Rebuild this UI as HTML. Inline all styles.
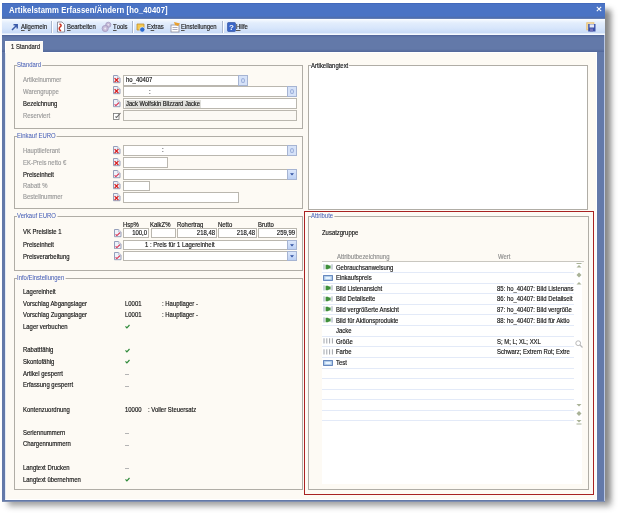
<!DOCTYPE html>
<html><head><meta charset="utf-8">
<style>
*{margin:0;padding:0;box-sizing:border-box}
html,body{width:620px;height:515px;overflow:hidden;background:#fff}
body{position:relative;font-family:"Liberation Sans",sans-serif;color:#222}
#w{position:absolute;left:0;top:0;width:620px;height:515px;filter:blur(0.35px)}
.a{position:absolute}
.t{position:absolute;white-space:nowrap;line-height:10px;height:10px;transform-origin:0 50%;-webkit-text-stroke:0.16px currentColor}
u{text-decoration:none;border-bottom:0.6px solid #555;line-height:5.5px;display:inline-block}
</style></head><body>
<div class="a" style="left:8px;top:10px;width:603px;height:496px;background:#404040;filter:blur(3px);opacity:.5"></div>
<div class="a" style="left:600px;top:10px;width:10px;height:490px;background:#404040;filter:blur(2.5px);opacity:.25"></div>
<div id="w">

<div class="a" style="left:2px;top:3px;width:603px;height:499px;background:#6379a9;"></div>
<div class="a" style="left:2px;top:501px;width:603px;height:1px;background:#7d8db0;"></div>
<div class="a" style="left:2px;top:3px;width:603px;height:16px;background:linear-gradient(#3b60b2 0,#4a73c5 1px,#4a73c4 13px,#4f6fb0 14.5px,#6a84b8 16px);"></div>
<div class="t" style="left:9px;top:5.20px;color:#fff;font-size:8.6px;font-weight:bold;transform:scaleX(0.898);-webkit-text-stroke:0;letter-spacing:0.1px">Artikelstamm Erfassen/Ändern [ho_40407]</div>
<svg class="a" style="left:595.5px;top:6px" width="6" height="6" viewBox="0 0 6 6"><path d="M0.8 0.8 L5.2 5.2 M5.2 0.8 L0.8 5.2" stroke="#fff" stroke-width="1.05"/></svg>
<div class="a" style="left:2px;top:19px;width:603px;height:16px;background:linear-gradient(#ffffff 0,#f0f6fe 1.5px,#e2edfc 4px,#d8e6fb 9px,#cadcf7 13.5px,#eef5fe 15px,#fff 16px);"></div>
<div class="a" style="left:2px;top:35px;width:603px;height:17px;background:linear-gradient(#4d6196 0,#5a70a3 1px,#6379a9 3px,#6379a9 14px,#586d9e 16px,#52679a 17px);"></div>
<div class="a" style="left:604px;top:35px;width:1px;height:466px;background:#b8c6e4;"></div>
<div class="a" style="left:5px;top:52px;width:592px;height:448px;background:#fdfaf4;border-top:1px solid #fff;border-right:1px solid #fff;border-bottom:1px solid #fff;border-left:1px solid #e4ebf6;"></div>
<div class="a" style="left:5px;top:41px;width:38px;height:12px;background:#fdfaf4;border-top:1px solid #fff;border-left:1px solid #fff;"></div>
<div class="t" style="left:10.5px;top:42.20px;color:#222;font-size:6.6px;font-weight:normal;transform:scaleX(0.9);">1 Standard</div>
<svg class="a" style="left:10px;top:22px" width="9" height="10" viewBox="0 0 9 10"><path d="M2 8 L7 3 M3.5 2.7 H7.2 V6.4" stroke="#3a5aa8" stroke-width="1.5" fill="none"/></svg>
<div class="t" style="left:21.3px;top:22.20px;color:#222;font-size:6.6px;font-weight:normal;transform:scaleX(0.9);"><u>A</u>llgemein</div>
<div class="a" style="left:51px;top:21px;width:1px;height:12px;background:#a9b6cc;"></div>
<div class="a" style="left:52px;top:21px;width:1px;height:12px;background:#fff;"></div>
<svg class="a" style="left:56px;top:21px" width="10" height="12" viewBox="0 0 10 12"><path d="M1.5 1 H6 L8.5 3.5 V11 H1.5 Z" fill="#fff" stroke="#7a7a8a" stroke-width=".8"/><path d="M3.5 3 Q6.5 4 4 6 Q2 8 5 10" stroke="#c83020" stroke-width="1.5" fill="none"/></svg>
<div class="t" style="left:66.7px;top:22.20px;color:#222;font-size:6.6px;font-weight:normal;transform:scaleX(0.9);"><u>B</u>earbeiten</div>
<svg class="a" style="left:101px;top:21px" width="11" height="12" viewBox="0 0 11 12"><circle cx="7.3" cy="3.8" r="2.6" fill="#c6bcd8" stroke="#9e94bc" stroke-width=".7"/><circle cx="4.2" cy="7.5" r="3.1" fill="#c6bcd8" stroke="#9e94bc" stroke-width=".7"/><circle cx="4.2" cy="7.5" r="1" fill="#eeeaf4"/><circle cx="7.3" cy="3.8" r="0.8" fill="#eeeaf4"/></svg>
<div class="t" style="left:113px;top:22.20px;color:#222;font-size:6.6px;font-weight:normal;transform:scaleX(0.9);"><u>T</u>ools</div>
<div class="a" style="left:132px;top:21px;width:1px;height:12px;background:#a9b6cc;"></div>
<div class="a" style="left:133px;top:21px;width:1px;height:12px;background:#fff;"></div>
<svg class="a" style="left:136px;top:21px" width="10" height="12" viewBox="0 0 10 12"><path d="M1 3 H8 V9 H1 Z" fill="#f4c850" stroke="#c09030" stroke-width=".8"/><circle cx="6.3" cy="8.6" r="2.6" fill="#2a6ad0" stroke="#fff" stroke-width=".6"/></svg>
<div class="t" style="left:147px;top:22.20px;color:#222;font-size:6.6px;font-weight:normal;transform:scaleX(0.9);">E<u>x</u>tras</div>
<svg class="a" style="left:169.5px;top:21px" width="11" height="12" viewBox="0 0 11 12"><rect x="1" y="4" width="8" height="7" fill="#fff" stroke="#8a8a9a" stroke-width=".8"/><path d="M2.5 6.5 H7.5 M2.5 8.5 H7.5" stroke="#8a8aa0" stroke-width=".7"/><path d="M4 1 L10 2.5 L8 5 L5 4 Z" fill="#e8a030"/></svg>
<div class="t" style="left:181px;top:22.20px;color:#222;font-size:6.6px;font-weight:normal;transform:scaleX(0.9);"><u>E</u>instellungen</div>
<div class="a" style="left:222px;top:21px;width:1px;height:12px;background:#a9b6cc;"></div>
<div class="a" style="left:223px;top:21px;width:1px;height:12px;background:#fff;"></div>
<svg class="a" style="left:226.5px;top:22px" width="9" height="10" viewBox="0 0 9 10"><rect x="0.5" y="0.5" width="8" height="9" rx="1" fill="#3a66c8" stroke="#2a4a98" stroke-width=".6"/><text x="4.5" y="8" font-family="Liberation Sans" font-weight="bold" font-size="8" fill="#fff" text-anchor="middle">?</text></svg>
<div class="t" style="left:236.4px;top:22.20px;color:#222;font-size:6.6px;font-weight:normal;transform:scaleX(0.9);"><u>H</u>ilfe</div>
<svg class="a" style="left:586px;top:22px" width="10" height="10" viewBox="0 0 10 10"><rect x="0.3" y="0.3" width="8" height="8" fill="#ecc070"/><rect x="1.3" y="1.3" width="6" height="6" fill="#f4e0b0"/><rect x="2.2" y="2" width="7.3" height="7.5" fill="#3a50a8"/><rect x="3.6" y="2.3" width="4.5" height="3.2" fill="#e4e8f6"/><rect x="4" y="6.5" width="3" height="3" fill="#7070b8"/></svg>
<div class="a" style="left:14px;top:65px;width:289px;height:64px;border:1px solid #b0ada6;"></div>
<div class="t" style="left:16.5px;top:60.10px;color:#4a62b8;font-size:6.6px;font-weight:normal;transform:scaleX(0.9);background:linear-gradient(transparent 3.5px,#fdfaf4 3.5px,#fdfaf4 7px,transparent 7px);padding-right:1.5px;-webkit-text-stroke:0.05px currentColor;">Standard</div>
<div class="t" style="left:23.2px;top:75.00px;color:#9a9a9a;font-size:6.6px;font-weight:normal;transform:scaleX(0.9);">Artikelnummer</div>
<div class="t" style="left:23.2px;top:86.80px;color:#9a9a9a;font-size:6.6px;font-weight:normal;transform:scaleX(0.9);">Warengruppe</div>
<div class="t" style="left:23.2px;top:98.70px;color:#141414;font-size:6.6px;font-weight:normal;transform:scaleX(0.9);">Bezeichnung</div>
<div class="t" style="left:23.2px;top:110.90px;color:#9a9a9a;font-size:6.6px;font-weight:normal;transform:scaleX(0.9);">Reserviert</div>
<svg class="a" style="left:113px;top:75px" width="8" height="8.5" viewBox="0 0 8 8.5"><path d="M0.5 0.5 H4.6 L7 2.9 V7.7 H0.5 Z" fill="#eef2fa" stroke="#8a94b2" stroke-width=".9"/><path d="M4.6 0.5 V2.9 H7" fill="#fff" stroke="#9aa4c0" stroke-width=".6"/><path d="M1.6 3.2 L5.4 7 M5.4 3.2 L1.6 7" stroke="#d81818" stroke-width="1.2"/></svg>
<svg class="a" style="left:113px;top:86px" width="8" height="8.5" viewBox="0 0 8 8.5"><path d="M0.5 0.5 H4.6 L7 2.9 V7.7 H0.5 Z" fill="#eef2fa" stroke="#8a94b2" stroke-width=".9"/><path d="M4.6 0.5 V2.9 H7" fill="#fff" stroke="#9aa4c0" stroke-width=".6"/><path d="M1.6 3.2 L5.4 7 M5.4 3.2 L1.6 7" stroke="#d81818" stroke-width="1.2"/></svg>
<svg class="a" style="left:113px;top:99px" width="8" height="8.5" viewBox="0 0 8 8.5"><path d="M0.5 0.5 H4.6 L7 2.9 V7.7 H0.5 Z" fill="#eef2fa" stroke="#8a94b2" stroke-width=".9"/><path d="M4.6 0.5 V2.9 H7" fill="#fff" stroke="#9aa4c0" stroke-width=".6"/><path d="M1.6 5.3 L2.9 6.6 L6 3.6" stroke="#d82848" stroke-width="1.1" fill="none"/></svg>
<svg class="a" style="left:113px;top:112px" width="8" height="8" viewBox="0 0 8 8"><rect x="0.5" y="1.5" width="5.5" height="6" fill="#fff" stroke="#777" stroke-width=".8"/><path d="M2.5 4.5 L3.5 5.5 L7.5 1" stroke="#666" stroke-width="1.1" fill="none"/></svg>
<div class="a" style="left:123px;top:75px;width:125px;height:11px;background:#fff;border:1px solid #bab7af;"></div>
<div class="a" style="left:238px;top:75px;width:10px;height:11px;background:#d6e2f8;border:1px solid #a6b4d2;"></div>
<div class="a" style="left:241px;top:78px;width:4px;height:5px;border:1px solid #98acd8;border-radius:50%;"></div>
<div class="t" style="left:126px;top:75.40px;color:#141414;font-size:6.6px;font-weight:normal;transform:scaleX(0.9);">ho_40407</div>
<div class="a" style="left:123px;top:86px;width:174px;height:11px;background:#fff;border:1px solid #bab7af;"></div>
<div class="a" style="left:287px;top:86px;width:10px;height:11px;background:#d6e2f8;border:1px solid #a6b4d2;"></div>
<div class="a" style="left:290px;top:89px;width:4px;height:5px;border:1px solid #98acd8;border-radius:50%;"></div>
<div class="t" style="left:149px;top:86.60px;color:#141414;font-size:6.6px;font-weight:normal;transform:scaleX(0.9);">:</div>
<div class="a" style="left:123px;top:98px;width:174px;height:11px;background:#fff;border:1px solid #bab7af;"></div>
<div class="a" style="left:124.5px;top:99.5px;width:76.0px;height:8.0px;background:#e0e0dc;"></div>
<div class="t" style="left:125.5px;top:99.00px;color:#141414;font-size:6.6px;font-weight:normal;transform:scaleX(0.875);">Jack Wolfskin Blizzard Jacke</div>
<div class="a" style="left:123px;top:110px;width:174px;height:11px;background:#fbf9f4;border:1px solid #bab7af;"></div>
<div class="a" style="left:14px;top:136px;width:289px;height:73px;border:1px solid #b0ada6;"></div>
<div class="t" style="left:16.5px;top:131.10px;color:#4a62b8;font-size:6.6px;font-weight:normal;transform:scaleX(0.9);background:linear-gradient(transparent 3.5px,#fdfaf4 3.5px,#fdfaf4 7px,transparent 7px);padding-right:1.5px;-webkit-text-stroke:0.05px currentColor;">Einkauf EURO</div>
<div class="t" style="left:23.2px;top:145.90px;color:#9a9a9a;font-size:6.6px;font-weight:normal;transform:scaleX(0.9);">Hauptlieferant</div>
<div class="t" style="left:23.2px;top:157.90px;color:#9a9a9a;font-size:6.6px;font-weight:normal;transform:scaleX(0.9);">EK-Preis netto €</div>
<div class="t" style="left:23.2px;top:170.10px;color:#141414;font-size:6.6px;font-weight:normal;transform:scaleX(0.9);">Preiseinheit</div>
<div class="t" style="left:23.2px;top:180.90px;color:#9a9a9a;font-size:6.6px;font-weight:normal;transform:scaleX(0.9);">Rabatt %</div>
<div class="t" style="left:23.2px;top:192.40px;color:#9a9a9a;font-size:6.6px;font-weight:normal;transform:scaleX(0.9);">Bestellnummer</div>
<svg class="a" style="left:113px;top:146px" width="8" height="8.5" viewBox="0 0 8 8.5"><path d="M0.5 0.5 H4.6 L7 2.9 V7.7 H0.5 Z" fill="#eef2fa" stroke="#8a94b2" stroke-width=".9"/><path d="M4.6 0.5 V2.9 H7" fill="#fff" stroke="#9aa4c0" stroke-width=".6"/><path d="M1.6 3.2 L5.4 7 M5.4 3.2 L1.6 7" stroke="#d81818" stroke-width="1.2"/></svg>
<svg class="a" style="left:113px;top:158px" width="8" height="8.5" viewBox="0 0 8 8.5"><path d="M0.5 0.5 H4.6 L7 2.9 V7.7 H0.5 Z" fill="#eef2fa" stroke="#8a94b2" stroke-width=".9"/><path d="M4.6 0.5 V2.9 H7" fill="#fff" stroke="#9aa4c0" stroke-width=".6"/><path d="M1.6 3.2 L5.4 7 M5.4 3.2 L1.6 7" stroke="#d81818" stroke-width="1.2"/></svg>
<svg class="a" style="left:113px;top:170px" width="8" height="8.5" viewBox="0 0 8 8.5"><path d="M0.5 0.5 H4.6 L7 2.9 V7.7 H0.5 Z" fill="#eef2fa" stroke="#8a94b2" stroke-width=".9"/><path d="M4.6 0.5 V2.9 H7" fill="#fff" stroke="#9aa4c0" stroke-width=".6"/><path d="M1.6 5.3 L2.9 6.6 L6 3.6" stroke="#d82848" stroke-width="1.1" fill="none"/></svg>
<svg class="a" style="left:113px;top:181px" width="8" height="8.5" viewBox="0 0 8 8.5"><path d="M0.5 0.5 H4.6 L7 2.9 V7.7 H0.5 Z" fill="#eef2fa" stroke="#8a94b2" stroke-width=".9"/><path d="M4.6 0.5 V2.9 H7" fill="#fff" stroke="#9aa4c0" stroke-width=".6"/><path d="M1.6 3.2 L5.4 7 M5.4 3.2 L1.6 7" stroke="#d81818" stroke-width="1.2"/></svg>
<svg class="a" style="left:113px;top:193px" width="8" height="8.5" viewBox="0 0 8 8.5"><path d="M0.5 0.5 H4.6 L7 2.9 V7.7 H0.5 Z" fill="#eef2fa" stroke="#8a94b2" stroke-width=".9"/><path d="M4.6 0.5 V2.9 H7" fill="#fff" stroke="#9aa4c0" stroke-width=".6"/><path d="M1.6 3.2 L5.4 7 M5.4 3.2 L1.6 7" stroke="#d81818" stroke-width="1.2"/></svg>
<div class="a" style="left:123px;top:145px;width:174px;height:11px;background:#fff;border:1px solid #bab7af;"></div>
<div class="a" style="left:287px;top:145px;width:10px;height:11px;background:#d6e2f8;border:1px solid #a6b4d2;"></div>
<div class="a" style="left:290px;top:148px;width:4px;height:5px;border:1px solid #98acd8;border-radius:50%;"></div>
<div class="t" style="left:162px;top:145.20px;color:#141414;font-size:6.6px;font-weight:normal;transform:scaleX(0.9);">:</div>
<div class="a" style="left:123px;top:157px;width:45px;height:11px;background:#fff;border:1px solid #bab7af;"></div>
<div class="a" style="left:123px;top:169px;width:174px;height:11px;background:#fff;border:1px solid #bab7af;"></div>
<div class="a" style="left:287px;top:169px;width:10px;height:11px;background:linear-gradient(#dce7fb,#bcd0f4);border:1px solid #a6b4d2;"></div>
<svg class="a" style="left:290px;top:173px" width="4" height="3" viewBox="0 0 4 3"><path d="M0 0.3 H4 L2 2.6 Z" fill="#3050a0"/></svg>
<div class="a" style="left:123px;top:181px;width:27px;height:10px;background:#fff;border:1px solid #bab7af;"></div>
<div class="a" style="left:123px;top:192px;width:116px;height:11px;background:#fff;border:1px solid #bab7af;"></div>
<div class="a" style="left:14px;top:216px;width:289px;height:55px;border:1px solid #b0ada6;"></div>
<div class="t" style="left:16.5px;top:211.10px;color:#4a62b8;font-size:6.6px;font-weight:normal;transform:scaleX(0.9);background:linear-gradient(transparent 3.5px,#fdfaf4 3.5px,#fdfaf4 7px,transparent 7px);padding-right:1.5px;-webkit-text-stroke:0.05px currentColor;">Verkauf EURO</div>
<div class="t" style="left:123px;top:219.60px;color:#141414;font-size:6.6px;font-weight:normal;transform:scaleX(0.9);">Hsp%</div>
<div class="t" style="left:150.2px;top:219.60px;color:#141414;font-size:6.6px;font-weight:normal;transform:scaleX(0.9);">KalkZ%</div>
<div class="t" style="left:176.8px;top:219.60px;color:#141414;font-size:6.6px;font-weight:normal;transform:scaleX(0.9);">Rohertrag</div>
<div class="t" style="left:217.7px;top:219.60px;color:#141414;font-size:6.6px;font-weight:normal;transform:scaleX(0.9);">Netto</div>
<div class="t" style="left:257.7px;top:219.60px;color:#141414;font-size:6.6px;font-weight:normal;transform:scaleX(0.9);">Brutto</div>
<div class="t" style="left:23.2px;top:226.90px;color:#141414;font-size:6.6px;font-weight:normal;transform:scaleX(0.9);">VK Preisliste 1</div>
<div class="t" style="left:23.2px;top:240.20px;color:#141414;font-size:6.6px;font-weight:normal;transform:scaleX(0.9);">Preiseinheit</div>
<div class="t" style="left:23.2px;top:251.80px;color:#141414;font-size:6.6px;font-weight:normal;transform:scaleX(0.9);">Preisverarbeitung</div>
<svg class="a" style="left:114px;top:229px" width="8" height="8.5" viewBox="0 0 8 8.5"><path d="M0.5 0.5 H4.6 L7 2.9 V7.7 H0.5 Z" fill="#eef2fa" stroke="#8a94b2" stroke-width=".9"/><path d="M4.6 0.5 V2.9 H7" fill="#fff" stroke="#9aa4c0" stroke-width=".6"/><path d="M1.6 5.3 L2.9 6.6 L6 3.6" stroke="#d82848" stroke-width="1.1" fill="none"/></svg>
<svg class="a" style="left:114px;top:240.5px" width="8" height="8.5" viewBox="0 0 8 8.5"><path d="M0.5 0.5 H4.6 L7 2.9 V7.7 H0.5 Z" fill="#eef2fa" stroke="#8a94b2" stroke-width=".9"/><path d="M4.6 0.5 V2.9 H7" fill="#fff" stroke="#9aa4c0" stroke-width=".6"/><path d="M1.6 5.3 L2.9 6.6 L6 3.6" stroke="#d82848" stroke-width="1.1" fill="none"/></svg>
<svg class="a" style="left:114px;top:252px" width="8" height="8.5" viewBox="0 0 8 8.5"><path d="M0.5 0.5 H4.6 L7 2.9 V7.7 H0.5 Z" fill="#eef2fa" stroke="#8a94b2" stroke-width=".9"/><path d="M4.6 0.5 V2.9 H7" fill="#fff" stroke="#9aa4c0" stroke-width=".6"/><path d="M1.6 5.3 L2.9 6.6 L6 3.6" stroke="#d82848" stroke-width="1.1" fill="none"/></svg>
<div class="a" style="left:123px;top:228px;width:26px;height:10px;background:#fff;border:1px solid #bab7af;"></div>
<div class="a" style="left:151px;top:228px;width:25px;height:10px;background:#fff;border:1px solid #bab7af;"></div>
<div class="a" style="left:177px;top:228px;width:40px;height:10px;background:#fff;border:1px solid #bab7af;"></div>
<div class="a" style="left:218px;top:228px;width:39px;height:10px;background:#fff;border:1px solid #bab7af;"></div>
<div class="a" style="left:258px;top:228px;width:39px;height:10px;background:#fff;border:1px solid #bab7af;"></div>
<div class="t" style="left:87px;width:60px;text-align:right;top:228.1px;color:#141414;font-size:6.6px;transform:scaleX(0.9);transform-origin:100% 50%">100,0</div>
<div class="t" style="left:155px;width:60px;text-align:right;top:228.1px;color:#141414;font-size:6.6px;transform:scaleX(0.9);transform-origin:100% 50%">218,48</div>
<div class="t" style="left:195px;width:60px;text-align:right;top:228.1px;color:#141414;font-size:6.6px;transform:scaleX(0.9);transform-origin:100% 50%">218,48</div>
<div class="t" style="left:235px;width:60px;text-align:right;top:228.1px;color:#141414;font-size:6.6px;transform:scaleX(0.9);transform-origin:100% 50%">259,99</div>
<div class="a" style="left:123px;top:240px;width:174px;height:10px;background:#fff;border:1px solid #bab7af;"></div>
<div class="a" style="left:287px;top:240px;width:10px;height:10px;background:linear-gradient(#dce7fb,#bcd0f4);border:1px solid #a6b4d2;"></div>
<svg class="a" style="left:290px;top:244px" width="4" height="3" viewBox="0 0 4 3"><path d="M0 0.3 H4 L2 2.6 Z" fill="#3050a0"/></svg>
<div class="t" style="left:144.5px;top:240.00px;color:#141414;font-size:6.6px;font-weight:normal;transform:scaleX(0.9);">1 : Preis für 1 Lagereinheit</div>
<div class="a" style="left:123px;top:251px;width:174px;height:10px;background:#fff;border:1px solid #bab7af;"></div>
<div class="a" style="left:287px;top:251px;width:10px;height:10px;background:linear-gradient(#dce7fb,#bcd0f4);border:1px solid #a6b4d2;"></div>
<svg class="a" style="left:290px;top:255px" width="4" height="3" viewBox="0 0 4 3"><path d="M0 0.3 H4 L2 2.6 Z" fill="#3050a0"/></svg>
<div class="a" style="left:14px;top:278px;width:289px;height:212px;border:1px solid #b0ada6;"></div>
<div class="t" style="left:16.5px;top:273.10px;color:#4a62b8;font-size:6.6px;font-weight:normal;transform:scaleX(0.9);background:linear-gradient(transparent 3.5px,#fdfaf4 3.5px,#fdfaf4 7px,transparent 7px);padding-right:1.5px;-webkit-text-stroke:0.05px currentColor;">Info/Einstellungen</div>
<div class="t" style="left:23.2px;top:286.90px;color:#141414;font-size:6.6px;font-weight:normal;transform:scaleX(0.9);">Lagereinheit</div>
<div class="t" style="left:23.2px;top:298.60px;color:#141414;font-size:6.6px;font-weight:normal;transform:scaleX(0.9);">Vorschlag Abgangslager</div>
<div class="t" style="left:23.2px;top:310.20px;color:#141414;font-size:6.6px;font-weight:normal;transform:scaleX(0.9);">Vorschlag Zugangslager</div>
<div class="t" style="left:23.2px;top:321.90px;color:#141414;font-size:6.6px;font-weight:normal;transform:scaleX(0.9);">Lager verbuchen</div>
<div class="t" style="left:23.2px;top:345.40px;color:#141414;font-size:6.6px;font-weight:normal;transform:scaleX(0.9);">Rabattfähig</div>
<div class="t" style="left:23.2px;top:356.80px;color:#141414;font-size:6.6px;font-weight:normal;transform:scaleX(0.9);">Skontofähig</div>
<div class="t" style="left:23.2px;top:368.70px;color:#141414;font-size:6.6px;font-weight:normal;transform:scaleX(0.9);">Artikel gesperrt</div>
<div class="t" style="left:23.2px;top:380.30px;color:#141414;font-size:6.6px;font-weight:normal;transform:scaleX(0.9);">Erfassung gesperrt</div>
<div class="t" style="left:23.2px;top:404.60px;color:#141414;font-size:6.6px;font-weight:normal;transform:scaleX(0.9);">Kontenzuordnung</div>
<div class="t" style="left:23.2px;top:427.70px;color:#141414;font-size:6.6px;font-weight:normal;transform:scaleX(0.9);">Seriennummern</div>
<div class="t" style="left:23.2px;top:439.20px;color:#141414;font-size:6.6px;font-weight:normal;transform:scaleX(0.9);">Chargennummern</div>
<div class="t" style="left:23.2px;top:462.80px;color:#141414;font-size:6.6px;font-weight:normal;transform:scaleX(0.9);">Langtext Drucken</div>
<div class="t" style="left:23.2px;top:474.70px;color:#141414;font-size:6.6px;font-weight:normal;transform:scaleX(0.9);">Langtext übernehmen</div>
<div class="t" style="left:125.4px;top:298.60px;color:#141414;font-size:6.6px;font-weight:normal;transform:scaleX(0.9);">L0001</div>
<div class="t" style="left:161.7px;top:298.60px;color:#141414;font-size:6.6px;font-weight:normal;transform:scaleX(0.9);">: Hauptlager -</div>
<div class="t" style="left:125.4px;top:310.20px;color:#141414;font-size:6.6px;font-weight:normal;transform:scaleX(0.9);">L0001</div>
<div class="t" style="left:161.7px;top:310.20px;color:#141414;font-size:6.6px;font-weight:normal;transform:scaleX(0.9);">: Hauptlager -</div>
<svg class="a" style="left:124.9px;top:324.09999999999997px" width="5" height="5" viewBox="0 0 5 5"><path d="M0.5 2.3 L1.9 3.8 L4.5 1" stroke="#2f8a3a" stroke-width="1.2" fill="none"/></svg>
<svg class="a" style="left:124.9px;top:347.59999999999997px" width="5" height="5" viewBox="0 0 5 5"><path d="M0.5 2.3 L1.9 3.8 L4.5 1" stroke="#2f8a3a" stroke-width="1.2" fill="none"/></svg>
<svg class="a" style="left:124.9px;top:359.0px" width="5" height="5" viewBox="0 0 5 5"><path d="M0.5 2.3 L1.9 3.8 L4.5 1" stroke="#2f8a3a" stroke-width="1.2" fill="none"/></svg>
<div class="a" style="left:125.4px;top:374.2px;width:4.0px;height:0.8000000000000114px;background:#b4b4b4;"></div>
<div class="a" style="left:125.4px;top:385.8px;width:4.0px;height:0.8000000000000114px;background:#b4b4b4;"></div>
<div class="t" style="left:125.4px;top:404.60px;color:#141414;font-size:6.6px;font-weight:normal;transform:scaleX(0.9);">10000</div>
<div class="t" style="left:148.1px;top:404.60px;color:#141414;font-size:6.6px;font-weight:normal;transform:scaleX(0.9);">: Voller Steuersatz</div>
<div class="a" style="left:125.4px;top:433.2px;width:4.0px;height:0.8000000000000114px;background:#b4b4b4;"></div>
<div class="a" style="left:125.4px;top:444.7px;width:4.0px;height:0.8000000000000114px;background:#b4b4b4;"></div>
<div class="a" style="left:125.4px;top:468.3px;width:4.0px;height:0.8000000000000114px;background:#b4b4b4;"></div>
<svg class="a" style="left:124.9px;top:476.9px" width="5" height="5" viewBox="0 0 5 5"><path d="M0.5 2.3 L1.9 3.8 L4.5 1" stroke="#2f8a3a" stroke-width="1.2" fill="none"/></svg>
<div class="a" style="left:308px;top:65px;width:280px;height:145px;background:#fff;border:1px solid #b0ada6;"></div>
<div class="t" style="left:310.5px;top:60.60px;color:#141414;font-size:6.6px;font-weight:normal;transform:scaleX(0.9);background:linear-gradient(transparent 3.5px,#fff 3.5px,#fff 7px,transparent 7px);padding-right:1px;">Artikellangtext</div>
<div class="a" style="left:304px;top:211px;width:290px;height:284px;border:1px solid #a82222;"></div>
<div class="a" style="left:308px;top:216px;width:281px;height:274px;border:1px solid #b0ada6;"></div>
<div class="t" style="left:310.5px;top:211.10px;color:#4a62b8;font-size:6.6px;font-weight:normal;transform:scaleX(0.9);background:linear-gradient(transparent 3.5px,#fdfaf4 3.5px,#fdfaf4 7px,transparent 7px);padding-right:1.5px;-webkit-text-stroke:0.05px currentColor;">Attribute</div>
<div class="t" style="left:322.4px;top:228.40px;color:#141414;font-size:6.6px;font-weight:normal;transform:scaleX(0.9);">Zusatzgruppe</div>
<div class="t" style="left:337.1px;top:251.70px;color:#8e8e8e;font-size:6.6px;font-weight:normal;transform:scaleX(0.9);">Attributbezeichnung</div>
<div class="t" style="left:498.2px;top:251.70px;color:#8e8e8e;font-size:6.6px;font-weight:normal;transform:scaleX(0.9);">Wert</div>
<div class="a" style="left:322px;top:262px;width:260px;height:222px;background:#fff;"></div>
<div class="a" style="left:322px;top:260.5px;width:262px;height:1.5px;background:#c9c7c0;"></div>
<div class="a" style="left:322px;top:272px;width:252px;height:1px;background:#e3eaf8;"></div>
<div class="a" style="left:322px;top:283px;width:252px;height:1px;background:#e3eaf8;"></div>
<div class="a" style="left:322px;top:293px;width:252px;height:1px;background:#e3eaf8;"></div>
<div class="a" style="left:322px;top:304px;width:252px;height:1px;background:#e3eaf8;"></div>
<div class="a" style="left:322px;top:314px;width:252px;height:1px;background:#e3eaf8;"></div>
<div class="a" style="left:322px;top:325px;width:252px;height:1px;background:#e3eaf8;"></div>
<div class="a" style="left:322px;top:336px;width:252px;height:1px;background:#e3eaf8;"></div>
<div class="a" style="left:322px;top:346px;width:252px;height:1px;background:#e3eaf8;"></div>
<div class="a" style="left:322px;top:357px;width:252px;height:1px;background:#e3eaf8;"></div>
<div class="a" style="left:322px;top:368px;width:252px;height:1px;background:#e3eaf8;"></div>
<div class="a" style="left:322px;top:378px;width:252px;height:1px;background:#e3eaf8;"></div>
<div class="a" style="left:322px;top:389px;width:252px;height:1px;background:#e3eaf8;"></div>
<div class="a" style="left:322px;top:399px;width:252px;height:1px;background:#e3eaf8;"></div>
<div class="a" style="left:322px;top:410px;width:252px;height:1px;background:#e3eaf8;"></div>
<div class="a" style="left:322px;top:420px;width:252px;height:1px;background:#e3eaf8;"></div>
<div class="t" style="left:336px;top:262.60px;color:#141414;font-size:6.6px;font-weight:normal;transform:scaleX(0.9);">Gebrauchsanweisung</div>
<svg class="a" style="left:322.5px;top:263.80px" width="10" height="6" viewBox="0 0 10 6"><path d="M1 0.3 V5.5 M9 0.3 V5.5" stroke="#9aa8b8" stroke-width="1"/><path d="M2.6 0.8 H5 L6 1.6 H7.6 V4.6 H6 L5 5.3 H2.6 Z" fill="#3f8f3a"/></svg>
<div class="t" style="left:336px;top:273.20px;color:#141414;font-size:6.6px;font-weight:normal;transform:scaleX(0.9);">Einkaufspreis</div>
<svg class="a" style="left:322.5px;top:274.70px" width="10" height="6" viewBox="0 0 10 6"><rect x="0.6" y="0.6" width="8.8" height="4.8" fill="#bcd6f0" stroke="#5a7eb8" stroke-width="1"/><rect x="2.5" y="2" width="5" height="2" fill="#e8f4ff"/></svg>
<div class="t" style="left:336px;top:283.80px;color:#141414;font-size:6.6px;font-weight:normal;transform:scaleX(0.9);">Bild Listenansicht</div>
<div class="t" style="left:496.6px;top:283.80px;width:86px;overflow:hidden;color:#141414;font-size:6.6px;transform:scaleX(0.9);">85: ho_40407: Bild Listenans</div>
<svg class="a" style="left:322.5px;top:285.00px" width="10" height="6" viewBox="0 0 10 6"><path d="M1 0.3 V5.5 M9 0.3 V5.5" stroke="#9aa8b8" stroke-width="1"/><path d="M2.6 0.8 H5 L6 1.6 H7.6 V4.6 H6 L5 5.3 H2.6 Z" fill="#3f8f3a"/></svg>
<div class="t" style="left:336px;top:294.40px;color:#141414;font-size:6.6px;font-weight:normal;transform:scaleX(0.9);">Bild Detailseite</div>
<div class="t" style="left:496.6px;top:294.40px;width:86px;overflow:hidden;color:#141414;font-size:6.6px;transform:scaleX(0.9);">86: ho_40407: Bild Detailseit</div>
<svg class="a" style="left:322.5px;top:295.60px" width="10" height="6" viewBox="0 0 10 6"><path d="M1 0.3 V5.5 M9 0.3 V5.5" stroke="#9aa8b8" stroke-width="1"/><path d="M2.6 0.8 H5 L6 1.6 H7.6 V4.6 H6 L5 5.3 H2.6 Z" fill="#3f8f3a"/></svg>
<div class="t" style="left:336px;top:305.00px;color:#141414;font-size:6.6px;font-weight:normal;transform:scaleX(0.9);">Bild vergrößerte Ansicht</div>
<div class="t" style="left:496.6px;top:305.00px;width:86px;overflow:hidden;color:#141414;font-size:6.6px;transform:scaleX(0.9);">87: ho_40407: Bild vergröße</div>
<svg class="a" style="left:322.5px;top:306.20px" width="10" height="6" viewBox="0 0 10 6"><path d="M1 0.3 V5.5 M9 0.3 V5.5" stroke="#9aa8b8" stroke-width="1"/><path d="M2.6 0.8 H5 L6 1.6 H7.6 V4.6 H6 L5 5.3 H2.6 Z" fill="#3f8f3a"/></svg>
<div class="t" style="left:336px;top:315.60px;color:#141414;font-size:6.6px;font-weight:normal;transform:scaleX(0.9);">Bild für Aktionsprodukte</div>
<div class="t" style="left:496.6px;top:315.60px;width:86px;overflow:hidden;color:#141414;font-size:6.6px;transform:scaleX(0.9);">88: ho_40407: Bild für Aktio</div>
<svg class="a" style="left:322.5px;top:316.80px" width="10" height="6" viewBox="0 0 10 6"><path d="M1 0.3 V5.5 M9 0.3 V5.5" stroke="#9aa8b8" stroke-width="1"/><path d="M2.6 0.8 H5 L6 1.6 H7.6 V4.6 H6 L5 5.3 H2.6 Z" fill="#3f8f3a"/></svg>
<div class="t" style="left:336px;top:326.20px;color:#141414;font-size:6.6px;font-weight:normal;transform:scaleX(0.9);">Jacke</div>
<div class="t" style="left:336px;top:336.80px;color:#141414;font-size:6.6px;font-weight:normal;transform:scaleX(0.9);">Größe</div>
<div class="t" style="left:496.6px;top:336.80px;width:86px;overflow:hidden;color:#141414;font-size:6.6px;transform:scaleX(0.9);">S; M; L; XL; XXL</div>
<svg class="a" style="left:322.5px;top:338.00px" width="10" height="6" viewBox="0 0 10 6"><path d="M1 0.3 V5.5 M3.8 0.3 V5.5 M6.6 0.3 V5.5 M9.4 0.3 V5.5" stroke="#a0a4aa" stroke-width="1"/></svg>
<div class="t" style="left:336px;top:347.40px;color:#141414;font-size:6.6px;font-weight:normal;transform:scaleX(0.9);">Farbe</div>
<div class="t" style="left:496.6px;top:347.40px;width:86px;overflow:hidden;color:#141414;font-size:6.6px;transform:scaleX(0.9);">Schwarz; Extrem Rot; Extre</div>
<svg class="a" style="left:322.5px;top:348.60px" width="10" height="6" viewBox="0 0 10 6"><path d="M1 0.3 V5.5 M3.8 0.3 V5.5 M6.6 0.3 V5.5 M9.4 0.3 V5.5" stroke="#a0a4aa" stroke-width="1"/></svg>
<div class="t" style="left:336px;top:358.00px;color:#141414;font-size:6.6px;font-weight:normal;transform:scaleX(0.9);">Test</div>
<svg class="a" style="left:322.5px;top:359.50px" width="10" height="6" viewBox="0 0 10 6"><rect x="0.6" y="0.6" width="8.8" height="4.8" fill="#bcd6f0" stroke="#5a7eb8" stroke-width="1"/><rect x="2.5" y="2" width="5" height="2" fill="#e8f4ff"/></svg>
<svg class="a" style="left:575px;top:262px" width="8" height="24" viewBox="0 0 8 24"><path d="M1.5 1.5 H6.5" stroke="#a9b296" stroke-width="1"/><path d="M1.5 5.5 L4 3 L6.5 5.5 Z" fill="#a9b296"/><path d="M1.5 13 L4 10.5 L6.5 13 L4 15.5 Z" fill="#a9b296"/><path d="M1.5 22.5 L4 20 L6.5 22.5 Z" fill="#a9b296"/></svg>
<svg class="a" style="left:575px;top:401px" width="8" height="25" viewBox="0 0 8 25"><path d="M1.5 3 L4 5.5 L6.5 3 Z" fill="#a9b296"/><path d="M1.5 12.5 L4 10 L6.5 12.5 L4 15 Z" fill="#a9b296"/><path d="M1.5 19 L4 21.5 L6.5 19 Z" fill="#a9b296"/><path d="M1.5 23 H6.5" stroke="#a9b296" stroke-width="1"/></svg>
<svg class="a" style="left:575px;top:340px" width="8" height="8" viewBox="0 0 8 8"><circle cx="3.2" cy="3.2" r="2.4" fill="none" stroke="#b8b8b8" stroke-width="1"/><path d="M5 5 L7.5 7.5" stroke="#b8b8b8" stroke-width="1.3"/></svg>
</div></body></html>
